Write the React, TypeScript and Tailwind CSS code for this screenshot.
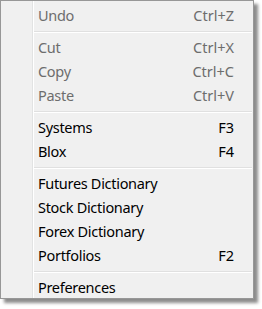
import React from 'react';

type Entry = { label: string; shortcut?: string; disabled?: boolean } | 'sep';

const entries: Entry[] = [
    { label: 'Undo', shortcut: 'Ctrl+Z', disabled: true },
    'sep',
    { label: 'Cut', shortcut: 'Ctrl+X', disabled: true },
    { label: 'Copy', shortcut: 'Ctrl+C', disabled: true },
    { label: 'Paste', shortcut: 'Ctrl+V', disabled: true },
    'sep',
    { label: 'Systems', shortcut: 'F3' },
    { label: 'Blox', shortcut: 'F4' },
    'sep',
    { label: 'Futures Dictionary' },
    { label: 'Stock Dictionary' },
    { label: 'Forex Dictionary' },
    { label: 'Portfolios', shortcut: 'F2' },
    'sep',
    { label: 'Preferences' },
];

export default function App() {
    return (
        <div className="w-[262px] h-[309px] bg-white" style={{ fontFamily: '"Noto Sans", "Open Sans", sans-serif' }}>
            <div className="w-[254px] h-[299px] border border-[#979797] bg-[#f0f0f0] flex overflow-hidden shadow-[4px_4px_3px_rgba(0,0,0,0.45)]">
                {/* icon gutter */}
                <div className="w-[31px] shrink-0" />
                <div className="w-px bg-[#e2e3e3]" />
                <div className="w-px bg-white" />

                <div className="flex-1 flex flex-col pt-[1px] pr-[1px]">
                    {entries.map((e, i) => {
                        if (e === 'sep') {
                            return (
                                <div key={`sep-${i}`} className="h-[8px] shrink-0 pt-[5px]">
                                    <div className="h-px bg-[#e0e0e0]" />
                                    <div className="h-px bg-white" />
                                </div>
                            );
                        }
                        return (
                            <div
                                key={e.label}
                                className={`h-[24px] shrink-0 flex justify-between pt-[2px] pl-[4px] pr-[18px] text-[14.5px] leading-[22px] tracking-[-0.3px] ${
                                    e.disabled ? 'text-[#6d6d6d]' : 'text-black'
                                }`}
                            >
                                <span>{e.label}</span>
                                {e.shortcut && <span className="tracking-normal">{e.shortcut}</span>}
                            </div>
                        );
                    })}
                </div>
            </div>
        </div>
    );
}
